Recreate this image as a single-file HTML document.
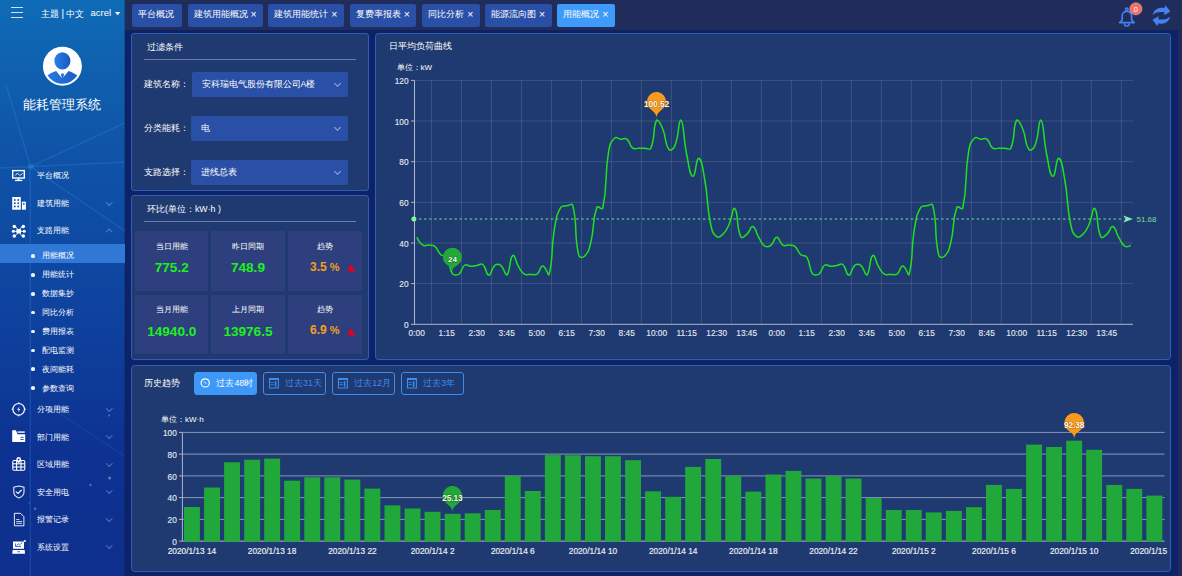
<!DOCTYPE html>
<html><head><meta charset="utf-8">
<style>
*{margin:0;padding:0;box-sizing:border-box}
html,body{width:1182px;height:576px;overflow:hidden}
body{position:relative;background:#0e2268;font-family:"Liberation Sans",sans-serif;color:#fff}
.abs{position:absolute}
#side{left:0;top:0;width:125px;height:576px;background:linear-gradient(180deg,#0f6bb6 0%,#0f55a8 24%,#0e45a0 50%,#0d3292 78%,#0e2f8d 100%);overflow:hidden}
#top{left:125px;top:0;width:1057px;height:30px;background:#202c59}
#strip{left:1178px;top:30px;width:4px;height:546px;background:#1f2a5a}
.tab{position:absolute;top:4px;height:23px;background:#2a4fa6;border-radius:2px;font-size:8.65px;line-height:21.6px;color:#fff;padding-left:6px;white-space:nowrap}
.tab .x{position:absolute;right:6.5px;top:-0.3px;font-size:10.5px}
.tab.on{background:#3f9bfa}
.panel{position:absolute;background:#1f3a70;border:1px solid #2c5fb5;border-radius:3px}
.ptitle{position:absolute;font-size:8.8px;white-space:nowrap;color:#fff}
.hr{position:absolute;height:1px;background:#6b7ba6}
.lbl{position:absolute;font-size:8.8px;white-space:nowrap}
.sel{position:absolute;background:#2a4fa6;border-radius:2px;font-size:8.65px;line-height:25px;padding-left:10px;white-space:nowrap}
.chev{position:absolute;width:5px;height:5px;border-right:1px solid rgba(220,230,255,0.6);border-bottom:1px solid rgba(220,230,255,0.6);transform:rotate(45deg);margin-top:-0.5px}
.cell{position:absolute;background:#2e3f7d;text-align:center}
.cell .t{position:absolute;left:0;right:0;font-size:7.6px}
.cell .v{position:absolute;left:0;right:0;font-size:13px;font-weight:bold;color:#1ff01f}
.menu{position:absolute;left:0;width:125px;font-size:8.3px;white-space:nowrap;margin-top:0.4px}
.menu .txt{position:absolute;left:37px}
.sub{position:absolute;left:0;width:125px;font-size:8.3px;white-space:nowrap}
.sub .dot{position:absolute;left:31.2px;width:3.7px;height:3.7px;border-radius:50%;background:#f0f4ff}
.sub .txt{position:absolute;left:42.3px}
.mchev{position:absolute;left:106.5px;width:4.5px;height:4.5px;border-right:1px solid rgba(255,255,255,0.33);border-bottom:1px solid rgba(255,255,255,0.33);transform:rotate(45deg)}
.btn{position:absolute;top:371.5px;height:23.5px;border:1px solid #3b8ef0;border-radius:3px;color:#3b8ef0;font-size:8.8px;line-height:21.5px;white-space:nowrap}
.btn.on{background:#3e98f8;border-color:#3e98f8;color:#fff}
svg text.ax{font-family:"Liberation Sans",sans-serif;font-size:8.3px;fill:#e6eaf2;stroke:#e6eaf2;stroke-width:0.12}
svg text.ax2{font-family:"Liberation Sans",sans-serif;font-size:8.3px;fill:#e6eaf2;stroke:#e6eaf2;stroke-width:0.2}
svg text.avg{font-family:"Liberation Sans",sans-serif;font-size:8px;fill:#7ddc9c}
svg text.pin{font-family:"Liberation Sans",sans-serif;fill:#fff8e8;stroke:rgba(120,70,10,0.55);stroke-width:1.1;paint-order:stroke;font-weight:bold}
</style></head><body>

<div id="side" class="abs">
  <svg class="abs" style="left:0;top:0" width="125" height="576">
    <g stroke="rgba(70,160,255,0.2)" stroke-width="1.4" fill="none">
      <line x1="30.6" y1="166.7" x2="6" y2="85"/>
      <line x1="30.6" y1="166.7" x2="125" y2="123"/>
      <line x1="30.6" y1="166.7" x2="125" y2="162"/>
      <line x1="30.6" y1="166.7" x2="125" y2="231"/>
      <line x1="30.6" y1="166.7" x2="0" y2="168"/>
      <line x1="30.3" y1="166.7" x2="30.3" y2="576"/>
      <line x1="47" y1="405.5" x2="125" y2="456" opacity="0.6"/>
    </g>
    <circle cx="30.6" cy="166.7" r="3" fill="rgba(120,180,255,0.15)"/>
    <circle cx="109.2" cy="415.6" r="1" fill="rgba(170,200,255,0.45)"/>
    <circle cx="109.6" cy="478.1" r="1.5" fill="rgba(170,200,255,0.5)"/>
    <circle cx="90.4" cy="485" r="1.2" fill="rgba(170,200,255,0.4)"/>
    <circle cx="35" cy="508.8" r="1.3" fill="rgba(170,200,255,0.4)"/>
    <circle cx="29.4" cy="503" r="0.7" fill="rgba(170,200,255,0.4)"/>
    <line x1="124.5" y1="0" x2="124.5" y2="576" stroke="rgba(0,20,80,0.25)" stroke-width="1"/>
  </svg>
  <!-- hamburger -->
  <div class="abs" style="left:11px;top:7px;width:12px;height:1.3px;background:#cfe0ff"></div>
  <div class="abs" style="left:11px;top:11.8px;width:12px;height:1.3px;background:#cfe0ff"></div>
  <div class="abs" style="left:11px;top:16.5px;width:12px;height:1.3px;background:#cfe0ff"></div>
  <div class="abs" style="left:41px;top:8px;font-size:9px;white-space:nowrap;line-height:11px">主题<span style="margin:0 1.8px 0 2.6px;font-size:10px;position:relative;top:-0.5px">|</span>中文</div>
  <div class="abs" style="left:90.5px;top:7px;font-size:9.5px;white-space:nowrap;line-height:11px">acrel</div>
  <svg class="abs" style="left:114.8px;top:11.8px" width="6" height="4"><path d="M0,0 L5.3,0 L2.65,3.3Z" fill="#fff"/></svg>
  <!-- avatar -->
  <svg class="abs" style="left:40px;top:44px" width="45" height="45" viewBox="40 44 45 45">
    <defs><linearGradient id="ag" x1="0" y1="0" x2="1" y2="0"><stop offset="0" stop-color="#2a80e8"/><stop offset="1" stop-color="#1558c0"/></linearGradient>
    <clipPath id="bodyclip"><circle cx="62.4" cy="66.3" r="17.4"/></clipPath></defs>
    <circle cx="62.4" cy="66.3" r="19.5" fill="#fff"/>
    <ellipse cx="62.4" cy="60.9" rx="8" ry="8.7" fill="url(#ag)"/>
    <path clip-path="url(#bodyclip)" d="M40,95 L40,82 C46,76 51,72.5 56.2,71 L62.2,78.6 L68.6,71 C73.5,72.5 79,76 85,82 L85,95 Z" fill="url(#ag)"/>
    <path d="M61.2,73.6 L63.6,73.6 L63.9,75 L63.1,78 L62.4,78.9 L61.7,78 L60.9,75Z" fill="url(#ag)"/>
  </svg>
  <div class="abs" style="left:22.6px;top:97px;font-size:13.3px;white-space:nowrap;line-height:16px;letter-spacing:0px">能耗管理系统</div>

  <!-- menu -->
  <svg class="abs" style="left:0;top:0" width="125" height="576"><rect x="12.7" y="170.6" width="11.6" height="7.4" fill="none" stroke="#fff" stroke-width="1.4"/><path d="M15.3,175.5 L17.4,173 L19.8,175.5 L22.7,173.4" fill="none" stroke="#fff" stroke-width="0.9"/><rect x="17.6" y="178.5" width="1.8" height="1.5" fill="#fff"/><rect x="15" y="179.8" width="7.3" height="1.3" fill="#fff"/></svg>
<div class="menu" style="top:170.1px;line-height:11px"><span class="txt">平台概况</span></div>
<svg class="abs" style="left:0;top:0" width="125" height="576"><rect x="12.2" y="197" width="8.6" height="12.7" fill="#fff"/><rect x="21.9" y="201.7" width="4" height="8" fill="#fff"/><g fill="#1454ae"><circle cx="14.8" cy="200" r="0.95"/><circle cx="18.2" cy="200" r="0.95"/><circle cx="14.8" cy="203.3" r="0.95"/><circle cx="18.2" cy="203.3" r="0.95"/><circle cx="14.8" cy="206.5" r="0.95"/><circle cx="18.2" cy="206.5" r="0.95"/><circle cx="23.8" cy="203.9" r="0.9"/></g></svg>
<div class="menu" style="top:197.6px;line-height:11px"><span class="txt">建筑用能</span></div>
<div class="mchev" style="top:199.6px"></div>
<svg class="abs" style="left:0;top:0" width="125" height="576"><g stroke="#fff" stroke-width="0.9" fill="none"><path d="M14.3,226.5 C16.5,226.5 17,229 18.7,231.3 C20.4,229 21,226.5 23.3,226.5"/><path d="M14.3,236 C16.5,236 17,233.6 18.7,231.3 C20.4,233.6 21,236 23.3,236"/><line x1="13.3" y1="231.3" x2="24.2" y2="231.3"/></g><g fill="#fff"><circle cx="14.3" cy="226.5" r="1.75"/><circle cx="23.3" cy="226.5" r="1.75"/><circle cx="13.3" cy="231.3" r="1.5"/><circle cx="24.2" cy="231.3" r="1.5"/><circle cx="14.3" cy="236" r="1.75"/><circle cx="23.3" cy="236" r="1.75"/><rect x="16.4" y="229.1" width="4.6" height="4.4" rx="1.2"/></g></svg>
<div class="menu" style="top:225.1px;line-height:11px"><span class="txt">支路用能</span></div>
<div class="mchev" style="top:229.6px;transform:rotate(225deg)"></div>
<div class="abs" style="left:0;top:244.4px;width:125px;height:18.6px;background:#2f78d6"></div>
<div class="sub" style="top:250.2px;line-height:11px"><span class="dot" style="top:3.8px"></span><span class="txt">用能概况</span></div>
<div class="sub" style="top:269.2px;line-height:11px"><span class="dot" style="top:3.8px"></span><span class="txt">用能统计</span></div>
<div class="sub" style="top:288.1px;line-height:11px"><span class="dot" style="top:3.8px"></span><span class="txt">数据集抄</span></div>
<div class="sub" style="top:306.9px;line-height:11px"><span class="dot" style="top:3.8px"></span><span class="txt">同比分析</span></div>
<div class="sub" style="top:325.9px;line-height:11px"><span class="dot" style="top:3.8px"></span><span class="txt">费用报表</span></div>
<div class="sub" style="top:344.8px;line-height:11px"><span class="dot" style="top:3.8px"></span><span class="txt">配电监测</span></div>
<div class="sub" style="top:363.6px;line-height:11px"><span class="dot" style="top:3.8px"></span><span class="txt">夜间能耗</span></div>
<div class="sub" style="top:382.6px;line-height:11px"><span class="dot" style="top:3.8px"></span><span class="txt">参数查询</span></div>
<svg class="abs" style="left:0;top:0" width="125" height="576"><circle cx="18.7" cy="409.3" r="5.8" fill="none" stroke="#fff" stroke-width="1.2"/><path d="M19.6,406.2 L17.2,409.8 H18.8 L17.9,412.6 L20.3,408.9 H18.7Z" fill="#fff"/><circle cx="18.7" cy="402.9" r="0.7" fill="#fff"/><circle cx="18.7" cy="415.7" r="0.7" fill="#fff"/><circle cx="12.3" cy="409.3" r="0.7" fill="#fff"/><circle cx="25.1" cy="409.3" r="0.7" fill="#fff"/></svg>
<div class="menu" style="top:403.7px;line-height:11px"><span class="txt">分项用能</span></div>
<div class="mchev" style="top:405.7px"></div>
<svg class="abs" style="left:0;top:0" width="125" height="576"><path d="M12.2,430.2 H16 L17.6,434.2 H25.2 V442 H12.2Z" fill="#fff"/><rect x="17.6" y="431.3" width="7.2" height="1.6" fill="#fff" opacity="0.85"/><rect x="20.4" y="436.9" width="3.3" height="0.9" fill="#1a4aa6"/><rect x="20.4" y="439" width="3.3" height="0.9" fill="#1a4aa6"/></svg>
<div class="menu" style="top:431.2px;line-height:11px"><span class="txt">部门用能</span></div>
<div class="mchev" style="top:433.2px"></div>
<svg class="abs" style="left:0;top:0" width="125" height="576"><g fill="none" stroke="#fff" stroke-width="1.1"><rect x="12.8" y="460.5" width="12" height="9.7" rx="1.2"/><line x1="12.8" y1="463.8" x2="24.8" y2="463.8"/><line x1="12.8" y1="467" x2="24.8" y2="467"/><line x1="16.6" y1="460.5" x2="16.6" y2="470.2"/><line x1="21" y1="460.5" x2="21" y2="470.2"/></g><path d="M18.7,457.1 A2.4,2.4 0 0 1 21.1,459.5 C21.1,461 18.7,463.4 18.7,463.4 C18.7,463.4 16.3,461 16.3,459.5 A2.4,2.4 0 0 1 18.7,457.1Z" fill="#fff"/><circle cx="18.7" cy="459.5" r="0.9" fill="#153f9f"/></svg>
<div class="menu" style="top:458.7px;line-height:11px"><span class="txt">区域用能</span></div>
<div class="mchev" style="top:460.7px"></div>
<svg class="abs" style="left:0;top:0" width="125" height="576"><path d="M18.9,486 L24,487.3 V492 C24,495 21.8,496.9 18.9,498 C16,496.9 13.8,495 13.8,492 V487.3Z" fill="none" stroke="#fff" stroke-width="1.1" opacity="0.9"/><path d="M15.8,491.6 L18.1,493.4 L21.7,489.8" fill="none" stroke="#fff" stroke-width="1.2"/></svg>
<div class="menu" style="top:486.2px;line-height:11px"><span class="txt">安全用电</span></div>
<div class="mchev" style="top:488.2px"></div>
<svg class="abs" style="left:0;top:0" width="125" height="576"><path d="M14.4,513.3 H20.5 L23.9,516.7 V525.8 H14.4Z" fill="none" stroke="#fff" stroke-width="1" opacity="0.9"/><g fill="#fff" opacity="0.85"><rect x="16.2" y="519" width="3.3" height="0.9"/><rect x="16.2" y="521" width="5.9" height="0.9"/><rect x="16.2" y="522.8" width="5.9" height="0.9"/></g></svg>
<div class="menu" style="top:513.7px;line-height:11px"><span class="txt">报警记录</span></div>
<div class="mchev" style="top:515.7px"></div>
<svg class="abs" style="left:0;top:0" width="125" height="576"><rect x="13" y="541.5" width="11" height="7.3" fill="#fff"/><path d="M12.7,550.1 H24.7 L25,553.7 H12.2Z" fill="#fff"/><path d="M15.5,546.5 L15.5,543.5 M15.5,546.5 H21 M16.5,545.5 L18.3,543.8 L19.5,544.8 L22.5,542.5" fill="none" stroke="#1a4aa6" stroke-width="0.8"/><rect x="17.3" y="551.4" width="2.6" height="0.8" fill="#1a4aa6"/><circle cx="24.8" cy="541" r="1.1" fill="#fff"/></svg>
<div class="menu" style="top:541.2px;line-height:11px"><span class="txt">系统设置</span></div>
<div class="mchev" style="top:543.2px"></div>
</div>

<div id="top" class="abs"></div>
<div id="strip" class="abs"></div>
<div class="tab" style="left:131.8px;width:50.3px">平台概况</div>
<div class="tab" style="left:187.6px;width:75.5px">建筑用能概况<span class=x>×</span></div>
<div class="tab" style="left:268.4px;width:75.5px">建筑用能统计<span class=x>×</span></div>
<div class="tab" style="left:349.5px;width:66.8px">复费率报表<span class=x>×</span></div>
<div class="tab" style="left:421.5px;width:58.3px">同比分析<span class=x>×</span></div>
<div class="tab" style="left:485px;width:66.6px">能源流向图<span class=x>×</span></div>
<div class="tab on" style="left:557px;width:57.8px">用能概况<span class=x>×</span></div>

<!-- bell & refresh -->
<svg class="abs" style="left:1100px;top:0" width="82" height="30" viewBox="1100 0 82 30">
  <circle cx="1126.8" cy="9.3" r="1.3" fill="none" stroke="#4282f5" stroke-width="1.5"/>
  <path d="M1119.6,22.6 L1122.2,20 V15.8 C1122.2,13 1124.2,11.3 1126.9,11.3 C1129.6,11.3 1131.6,13 1131.6,15.8 V20 L1134.2,22.6 Z" fill="none" stroke="#4282f5" stroke-width="1.7" stroke-linejoin="round"/>
  <path d="M1124.3,23.4 A2.5,2.5 0 0 0 1129.3,23.4" fill="none" stroke="#4282f5" stroke-width="1.5"/>
  <circle cx="1135.9" cy="8.8" r="6.1" fill="#f36c6a" stroke="#f8b8b0" stroke-width="0.5"/>
  <text x="1135.9" y="11.6" text-anchor="middle" font-family="Liberation Sans" font-size="7.5" fill="#fff">0</text>
  <path d="M1152.5,15 C1154,9 1158.5,7.2 1164.5,7.9 L1165.4,5.3 L1170.4,11.6 L1164.2,15.2 L1164.4,12.2 C1159.5,11.3 1155,12.3 1152.5,15 Z" fill="#4282f5"/>
  <path d="M1170.3,16.4 C1168.8,22.4 1164.3,24.2 1158.3,23.5 L1157.4,26.1 L1152.4,19.8 L1158.6,16.2 L1158.4,19.2 C1163.3,20.1 1167.8,19.1 1170.3,16.4 Z" fill="#4282f5"/>
</svg>

<!-- filter panel -->
<div class="panel" style="left:131px;top:33px;width:238px;height:158px"></div>
<div class="ptitle" style="left:147px;top:41.8px;line-height:11px">过滤条件</div>
<div class="hr" style="left:144px;top:59px;width:212px"></div>
<div class="lbl" style="left:144px;top:79px;line-height:11px">建筑名称：</div>
<div class="sel" style="left:191.5px;top:72px;width:156.5px;height:25px">安科瑞电气股份有限公司A楼</div>
<div class="chev" style="left:335px;top:81px"></div>
<div class="lbl" style="left:144px;top:123px;line-height:11px">分类能耗：</div>
<div class="sel" style="left:191px;top:116px;width:157px;height:25px">电</div>
<div class="chev" style="left:335px;top:125px"></div>
<div class="lbl" style="left:144px;top:167px;line-height:11px">支路选择：</div>
<div class="sel" style="left:191px;top:160px;width:157px;height:25px">进线总表</div>
<div class="chev" style="left:335px;top:169px"></div>

<!-- ratio panel -->
<div class="panel" style="left:131px;top:195px;width:238px;height:165px"></div>
<div class="ptitle" style="left:147px;top:203.5px;line-height:11px">环比(单位：kW·h )</div>
<div class="hr" style="left:144px;top:221px;width:212px"></div>
<div class="cell" style="left:135.2px;top:231.3px;width:73.1px;height:59.6px"><div class="t" style="top:9.3px;line-height:11px">当日用能</div><div class="v" style="top:28.8px;line-height:16px;font-size:13.6px">775.2</div></div>
<div class="cell" style="left:211.3px;top:231.3px;width:73.3px;height:59.6px"><div class="t" style="top:9.3px;line-height:11px">昨日同期</div><div class="v" style="top:28.8px;line-height:16px;font-size:13.6px">748.9</div></div>
<div class="cell" style="left:287.8px;top:231.3px;width:73.9px;height:59.6px"><div class="t" style="top:9.3px;line-height:11px">趋势</div><div class="v" style="top:27.6px;line-height:16px;color:#f5a020;font-size:12px;left:22.3px;text-align:left">3.5<span style='margin-left:3px;font-size:11px'>%</span></div><svg class="abs" style="left:59.3px;top:33.0px" width="10" height="8"><path d="M0,7.2 L4.1,0 L8.2,7.2Z" fill="#e8001a"/></svg></div>
<div class="cell" style="left:135.2px;top:294.8px;width:73.1px;height:59.3px"><div class="t" style="top:9.3px;line-height:11px">当月用能</div><div class="v" style="top:28.8px;line-height:16px;font-size:13.6px">14940.0</div></div>
<div class="cell" style="left:211.3px;top:294.8px;width:73.3px;height:59.3px"><div class="t" style="top:9.3px;line-height:11px">上月同期</div><div class="v" style="top:28.8px;line-height:16px;font-size:13.6px">13976.5</div></div>
<div class="cell" style="left:287.8px;top:294.8px;width:73.9px;height:59.3px"><div class="t" style="top:9.3px;line-height:11px">趋势</div><div class="v" style="top:27.6px;line-height:16px;color:#f5a020;font-size:12px;left:22.3px;text-align:left">6.9<span style='margin-left:3px;font-size:11px'>%</span></div><svg class="abs" style="left:59.3px;top:33.0px" width="10" height="8"><path d="M0,7.2 L4.1,0 L8.2,7.2Z" fill="#e8001a"/></svg></div>

<!-- line chart panel -->
<div class="panel" style="left:375px;top:33px;width:796.4px;height:326.6px;border-radius:3.5px"></div>
<div class="ptitle" style="left:389px;top:41.3px;line-height:11px;font-size:8.6px">日平均负荷曲线</div>
<div class="abs" style="left:396.5px;top:63px;font-size:8px;white-space:nowrap;line-height:10px">单位：kW</div>

<!-- history panel -->
<div class="panel" style="left:131px;top:365px;width:1040.4px;height:206.8px;border-radius:3.5px"></div>
<div class="ptitle" style="left:143.5px;top:378px;line-height:11px">历史趋势</div>
<div class="btn on" style="left:194.4px;width:62.6px"><svg class="abs" style="left:4.6px;top:4.8px" width="12" height="12" viewBox="0 0 12 12"><circle cx="5.2" cy="5.9" r="4.1" fill="none" stroke="#fff" stroke-width="1.15"/><path d="M4.3,4.6 L6,6.7" fill="none" stroke="#fff" stroke-width="1"/></svg><span class="abs" style="left:21px;top:0">过去48时</span></div>
<div class="btn" style="left:263px;width:62.9px"><svg class="abs" style="left:4px;top:4px" width="12" height="12" viewBox="0 0 12 12"><path d="M1.5,1.6 H10.4 V11 H1.5Z" fill="none" stroke="#3b8ef0" stroke-width="1.1"/><rect x="1" y="1.1" width="9.9" height="1.9" fill="#3b8ef0"/><rect x="2.7" y="5" width="3" height="0.9" fill="#3b8ef0"/><rect x="2.7" y="7.2" width="3" height="0.9" fill="#3b8ef0"/><rect x="6.8" y="4.3" width="1.6" height="5.4" fill="#3b8ef0"/></svg><span class="abs" style="left:21px;top:0">过去31天</span></div>
<div class="btn" style="left:332.3px;width:62.7px"><svg class="abs" style="left:4px;top:4px" width="12" height="12" viewBox="0 0 12 12"><path d="M1.5,1.6 H10.4 V11 H1.5Z" fill="none" stroke="#3b8ef0" stroke-width="1.1"/><rect x="1" y="1.1" width="9.9" height="1.9" fill="#3b8ef0"/><rect x="2.7" y="5" width="3" height="0.9" fill="#3b8ef0"/><rect x="2.7" y="7.2" width="3" height="0.9" fill="#3b8ef0"/><rect x="6.8" y="4.3" width="1.6" height="5.4" fill="#3b8ef0"/></svg><span class="abs" style="left:21px;top:0">过去12月</span></div>
<div class="btn" style="left:401.3px;width:62.6px"><svg class="abs" style="left:4px;top:4px" width="12" height="12" viewBox="0 0 12 12"><path d="M1.5,1.6 H10.4 V11 H1.5Z" fill="none" stroke="#3b8ef0" stroke-width="1.1"/><rect x="1" y="1.1" width="9.9" height="1.9" fill="#3b8ef0"/><rect x="2.7" y="5" width="3" height="0.9" fill="#3b8ef0"/><rect x="2.7" y="7.2" width="3" height="0.9" fill="#3b8ef0"/><rect x="6.8" y="4.3" width="1.6" height="5.4" fill="#3b8ef0"/></svg><span class="abs" style="left:21px;top:0">过去3年</span></div>
<div class="abs" style="left:161px;top:415px;font-size:8px;white-space:nowrap;line-height:10px">单位：kW·h</div>

<svg class="abs" style="left:0;top:0" width="1182" height="576">
<defs><clipPath id="bclip"><rect x="131" y="365" width="1037" height="207"/></clipPath></defs>
<line x1="414.5" y1="283.6" x2="1133" y2="283.6" stroke="rgba(255,255,255,0.13)" stroke-width="1"/>
<line x1="414.5" y1="243.0" x2="1133" y2="243.0" stroke="rgba(255,255,255,0.13)" stroke-width="1"/>
<line x1="414.5" y1="202.3" x2="1133" y2="202.3" stroke="rgba(255,255,255,0.13)" stroke-width="1"/>
<line x1="414.5" y1="161.7" x2="1133" y2="161.7" stroke="rgba(255,255,255,0.13)" stroke-width="1"/>
<line x1="414.5" y1="121.0" x2="1133" y2="121.0" stroke="rgba(255,255,255,0.13)" stroke-width="1"/>
<line x1="414.5" y1="80.4" x2="1133" y2="80.4" stroke="rgba(255,255,255,0.13)" stroke-width="1"/>
<line x1="431.5" y1="80.5" x2="431.5" y2="324.3" stroke="rgba(255,255,255,0.13)" stroke-width="1"/>
<line x1="461.5" y1="80.5" x2="461.5" y2="324.3" stroke="rgba(255,255,255,0.13)" stroke-width="1"/>
<line x1="491.5" y1="80.5" x2="491.5" y2="324.3" stroke="rgba(255,255,255,0.13)" stroke-width="1"/>
<line x1="521.5" y1="80.5" x2="521.5" y2="324.3" stroke="rgba(255,255,255,0.13)" stroke-width="1"/>
<line x1="551.5" y1="80.5" x2="551.5" y2="324.3" stroke="rgba(255,255,255,0.13)" stroke-width="1"/>
<line x1="581.5" y1="80.5" x2="581.5" y2="324.3" stroke="rgba(255,255,255,0.13)" stroke-width="1"/>
<line x1="611.4" y1="80.5" x2="611.4" y2="324.3" stroke="rgba(255,255,255,0.13)" stroke-width="1"/>
<line x1="641.4" y1="80.5" x2="641.4" y2="324.3" stroke="rgba(255,255,255,0.13)" stroke-width="1"/>
<line x1="671.4" y1="80.5" x2="671.4" y2="324.3" stroke="rgba(255,255,255,0.13)" stroke-width="1"/>
<line x1="701.4" y1="80.5" x2="701.4" y2="324.3" stroke="rgba(255,255,255,0.13)" stroke-width="1"/>
<line x1="731.4" y1="80.5" x2="731.4" y2="324.3" stroke="rgba(255,255,255,0.13)" stroke-width="1"/>
<line x1="761.4" y1="80.5" x2="761.4" y2="324.3" stroke="rgba(255,255,255,0.13)" stroke-width="1"/>
<line x1="791.4" y1="80.5" x2="791.4" y2="324.3" stroke="rgba(255,255,255,0.13)" stroke-width="1"/>
<line x1="821.4" y1="80.5" x2="821.4" y2="324.3" stroke="rgba(255,255,255,0.13)" stroke-width="1"/>
<line x1="851.4" y1="80.5" x2="851.4" y2="324.3" stroke="rgba(255,255,255,0.13)" stroke-width="1"/>
<line x1="881.3" y1="80.5" x2="881.3" y2="324.3" stroke="rgba(255,255,255,0.13)" stroke-width="1"/>
<line x1="911.3" y1="80.5" x2="911.3" y2="324.3" stroke="rgba(255,255,255,0.13)" stroke-width="1"/>
<line x1="941.3" y1="80.5" x2="941.3" y2="324.3" stroke="rgba(255,255,255,0.13)" stroke-width="1"/>
<line x1="971.3" y1="80.5" x2="971.3" y2="324.3" stroke="rgba(255,255,255,0.13)" stroke-width="1"/>
<line x1="1001.3" y1="80.5" x2="1001.3" y2="324.3" stroke="rgba(255,255,255,0.13)" stroke-width="1"/>
<line x1="1031.3" y1="80.5" x2="1031.3" y2="324.3" stroke="rgba(255,255,255,0.13)" stroke-width="1"/>
<line x1="1061.3" y1="80.5" x2="1061.3" y2="324.3" stroke="rgba(255,255,255,0.13)" stroke-width="1"/>
<line x1="1091.3" y1="80.5" x2="1091.3" y2="324.3" stroke="rgba(255,255,255,0.13)" stroke-width="1"/>
<line x1="1121.3" y1="80.5" x2="1121.3" y2="324.3" stroke="rgba(255,255,255,0.13)" stroke-width="1"/>
<line x1="414.5" y1="80.5" x2="414.5" y2="324.8" stroke="#aeb6d0" stroke-width="1"/>
<line x1="414.5" y1="324.3" x2="1133" y2="324.3" stroke="#aeb6d0" stroke-width="1"/>
<line x1="411" y1="324.3" x2="414.5" y2="324.3" stroke="#aeb6d0" stroke-width="1"/>
<text x="408.5" y="327.9" text-anchor="end" class="ax">0</text>
<line x1="411" y1="283.6" x2="414.5" y2="283.6" stroke="#aeb6d0" stroke-width="1"/>
<text x="408.5" y="287.2" text-anchor="end" class="ax">20</text>
<line x1="411" y1="243.0" x2="414.5" y2="243.0" stroke="#aeb6d0" stroke-width="1"/>
<text x="408.5" y="246.6" text-anchor="end" class="ax">40</text>
<line x1="411" y1="202.3" x2="414.5" y2="202.3" stroke="#aeb6d0" stroke-width="1"/>
<text x="408.5" y="205.9" text-anchor="end" class="ax">60</text>
<line x1="411" y1="161.7" x2="414.5" y2="161.7" stroke="#aeb6d0" stroke-width="1"/>
<text x="408.5" y="165.3" text-anchor="end" class="ax">80</text>
<line x1="411" y1="121.0" x2="414.5" y2="121.0" stroke="#aeb6d0" stroke-width="1"/>
<text x="408.5" y="124.6" text-anchor="end" class="ax">100</text>
<line x1="411" y1="80.4" x2="414.5" y2="80.4" stroke="#aeb6d0" stroke-width="1"/>
<text x="408.5" y="84.0" text-anchor="end" class="ax">120</text>
<text x="416.7" y="336" text-anchor="middle" class="ax">0:00</text>
<text x="446.7" y="336" text-anchor="middle" class="ax">1:15</text>
<text x="476.7" y="336" text-anchor="middle" class="ax">2:30</text>
<text x="506.7" y="336" text-anchor="middle" class="ax">3:45</text>
<text x="536.7" y="336" text-anchor="middle" class="ax">5:00</text>
<text x="566.7" y="336" text-anchor="middle" class="ax">6:15</text>
<text x="596.7" y="336" text-anchor="middle" class="ax">7:30</text>
<text x="626.7" y="336" text-anchor="middle" class="ax">8:45</text>
<text x="656.7" y="336" text-anchor="middle" class="ax">10:00</text>
<text x="686.7" y="336" text-anchor="middle" class="ax">11:15</text>
<text x="716.7" y="336" text-anchor="middle" class="ax">12:30</text>
<text x="746.7" y="336" text-anchor="middle" class="ax">13:45</text>
<text x="776.7" y="336" text-anchor="middle" class="ax">0:00</text>
<text x="806.7" y="336" text-anchor="middle" class="ax">1:15</text>
<text x="836.7" y="336" text-anchor="middle" class="ax">2:30</text>
<text x="866.7" y="336" text-anchor="middle" class="ax">3:45</text>
<text x="896.7" y="336" text-anchor="middle" class="ax">5:00</text>
<text x="926.7" y="336" text-anchor="middle" class="ax">6:15</text>
<text x="956.7" y="336" text-anchor="middle" class="ax">7:30</text>
<text x="986.7" y="336" text-anchor="middle" class="ax">8:45</text>
<text x="1016.7" y="336" text-anchor="middle" class="ax">10:00</text>
<text x="1046.7" y="336" text-anchor="middle" class="ax">11:15</text>
<text x="1076.7" y="336" text-anchor="middle" class="ax">12:30</text>
<text x="1106.7" y="336" text-anchor="middle" class="ax">13:45</text>
<line x1="419" y1="219" x2="1124" y2="219" stroke="#5cc096" stroke-width="1.6" stroke-dasharray="2.4,2.67" opacity="0.85"/>
<circle cx="413.9" cy="219" r="2.5" fill="#80f5a5"/>
<path d="M1123.3,215.6 L1133,219 L1123.3,222.4 L1125.5,219 Z" fill="#7ff0b0"/>
<text x="1136.5" y="222.2" class="avg">51.68</text>
<path d="M416.80,237.20 C416.80,237.20 419.06,242.64 422.80,245.10 C425.06,246.59 425.83,244.78 428.80,245.10 C431.83,245.43 432.56,244.59 434.80,246.40 C438.56,249.44 437.10,251.50 440.80,254.80 C443.10,256.85 445.24,254.55 446.80,257.10 C451.24,264.35 448.28,267.88 452.80,274.40 C454.28,275.10 456.70,275.10 458.80,274.40 C462.70,271.34 460.93,267.61 464.80,265.00 C466.93,263.56 467.78,266.20 470.80,266.30 C473.78,266.40 473.80,265.85 476.80,265.40 C479.80,264.95 480.81,262.89 482.80,264.50 C486.81,267.74 485.70,274.87 488.80,275.10 C491.70,275.10 490.87,268.58 494.80,265.40 C496.87,263.73 498.73,263.73 500.80,265.40 C504.73,268.58 504.65,275.10 506.80,275.10 C510.65,271.92 509.14,257.91 512.80,255.50 C515.14,253.96 515.30,261.68 518.80,267.20 C521.30,271.13 521.14,272.21 524.80,274.40 C527.14,275.10 527.80,274.40 530.80,274.40 C533.80,274.40 534.58,275.10 536.80,274.40 C540.58,271.78 539.88,265.93 542.80,266.10 C545.88,266.28 547.71,275.10 548.80,275.10 C553.71,258.93 550.55,250.58 554.80,226.60 C556.55,216.73 556.22,215.35 560.80,207.40 C562.22,204.95 563.75,206.31 566.80,205.80 C569.75,205.31 572.16,202.75 572.80,205.40 C578.16,227.60 573.44,232.94 578.80,255.50 C579.44,258.19 583.06,257.79 584.80,255.90 C589.06,251.24 589.04,249.52 590.80,242.40 C595.04,225.27 591.67,222.10 596.80,207.40 C597.67,204.90 602.23,210.69 602.80,208.00 C608.23,182.19 603.95,178.67 608.80,150.40 C609.95,143.67 610.65,141.88 614.80,138.00 C616.65,136.28 617.77,138.90 620.80,139.20 C623.77,139.50 624.66,137.59 626.80,139.20 C630.66,142.09 628.94,145.31 632.80,148.20 C634.94,149.81 635.80,148.20 638.80,148.20 C641.80,148.20 641.80,148.20 644.80,148.20 C647.80,148.20 649.77,150.63 650.80,148.20 C655.77,136.53 652.44,126.98 656.80,120.00 C658.44,120.00 660.77,124.05 662.80,129.00 C666.77,138.70 664.27,142.93 668.80,149.30 C670.27,151.38 673.56,148.92 674.80,145.90 C679.56,134.27 678.23,120.00 680.80,120.00 C684.23,122.60 683.11,137.66 686.80,155.00 C689.11,165.86 689.57,175.51 692.80,176.40 C695.57,177.16 696.05,157.47 698.80,158.30 C702.05,159.27 702.81,168.94 704.80,180.00 C708.81,202.29 706.15,203.02 710.80,225.00 C712.15,231.37 712.77,233.54 716.80,236.70 C718.77,238.24 720.61,236.54 722.80,234.40 C726.61,230.69 726.46,230.03 728.80,225.00 C732.46,217.13 732.53,206.39 734.80,208.60 C738.53,212.24 735.90,226.16 740.80,236.70 C741.90,239.06 744.43,236.39 746.80,234.40 C750.43,231.34 750.15,225.92 752.80,226.60 C756.15,227.47 755.54,232.21 758.80,237.50 C761.54,241.96 761.00,243.63 764.80,246.10 C767.00,247.53 768.55,246.97 770.80,245.30 C774.55,242.52 773.78,237.25 776.80,237.20 C779.78,237.15 779.06,242.64 782.80,245.10 C785.06,246.59 785.83,244.78 788.80,245.10 C791.83,245.43 792.56,244.59 794.80,246.40 C798.56,249.44 797.10,251.50 800.80,254.80 C803.10,256.85 805.24,254.55 806.80,257.10 C811.24,264.35 808.28,267.88 812.80,274.40 C814.28,275.10 816.70,275.10 818.80,274.40 C822.70,271.34 820.93,267.61 824.80,265.00 C826.93,263.56 827.78,266.20 830.80,266.30 C833.78,266.40 833.80,265.85 836.80,265.40 C839.80,264.95 840.81,262.89 842.80,264.50 C846.81,267.74 845.70,274.87 848.80,275.10 C851.70,275.10 850.87,268.58 854.80,265.40 C856.87,263.73 858.73,263.73 860.80,265.40 C864.73,268.58 864.65,275.10 866.80,275.10 C870.65,271.92 869.14,257.91 872.80,255.50 C875.14,253.96 875.30,261.68 878.80,267.20 C881.30,271.13 881.14,272.21 884.80,274.40 C887.14,275.10 887.80,274.40 890.80,274.40 C893.80,274.40 894.58,275.10 896.80,274.40 C900.58,271.78 899.88,265.93 902.80,266.10 C905.88,266.28 907.71,275.10 908.80,275.10 C913.71,258.93 910.55,250.58 914.80,226.60 C916.55,216.73 916.22,215.35 920.80,207.40 C922.22,204.95 923.75,206.31 926.80,205.80 C929.75,205.31 932.16,202.75 932.80,205.40 C938.16,227.60 933.44,232.94 938.80,255.50 C939.44,258.19 943.06,257.79 944.80,255.90 C949.06,251.24 949.04,249.52 950.80,242.40 C955.04,225.27 951.67,222.10 956.80,207.40 C957.67,204.90 962.23,210.69 962.80,208.00 C968.23,182.19 963.95,178.67 968.80,150.40 C969.95,143.67 970.65,141.88 974.80,138.00 C976.65,136.28 977.77,138.90 980.80,139.20 C983.77,139.50 984.66,137.59 986.80,139.20 C990.66,142.09 988.94,145.31 992.80,148.20 C994.94,149.81 995.80,148.20 998.80,148.20 C1001.80,148.20 1001.80,148.20 1004.80,148.20 C1007.80,148.20 1009.77,150.63 1010.80,148.20 C1015.77,136.53 1012.44,126.98 1016.80,120.00 C1018.44,120.00 1020.77,124.05 1022.80,129.00 C1026.77,138.70 1024.27,142.93 1028.80,149.30 C1030.27,151.38 1033.56,148.92 1034.80,145.90 C1039.56,134.27 1038.23,120.00 1040.80,120.00 C1044.23,122.60 1043.11,137.66 1046.80,155.00 C1049.11,165.86 1049.57,175.51 1052.80,176.40 C1055.57,177.16 1056.05,157.47 1058.80,158.30 C1062.05,159.27 1062.81,168.94 1064.80,180.00 C1068.81,202.29 1066.15,203.02 1070.80,225.00 C1072.15,231.37 1072.77,233.54 1076.80,236.70 C1078.77,238.24 1080.61,236.54 1082.80,234.40 C1086.61,230.69 1086.46,230.03 1088.80,225.00 C1092.46,217.13 1092.53,206.39 1094.80,208.60 C1098.53,212.24 1095.90,226.16 1100.80,236.70 C1101.90,239.06 1104.43,236.39 1106.80,234.40 C1110.43,231.34 1110.15,225.92 1112.80,226.60 C1116.15,227.47 1115.54,232.21 1118.80,237.50 C1121.54,241.96 1121.00,243.63 1124.80,246.10 C1127.00,247.53 1130.80,245.30 1130.80,245.30" fill="none" stroke="#1fe01f" stroke-width="1.5" stroke-linejoin="round"/>
<path d="M648.05,105.93 A9.5,9.5 0 1 1 664.95,105.93 C662.36,111.01 656.50,111.45 656.50,118.10 C656.50,111.45 650.64,111.01 648.05,105.93Z" fill="#f89a1e"/><text x="656.5" y="106.8" text-anchor="middle" class="pin" style="font-size:8.2px;stroke:rgba(150,80,0,0.6)">100.52</text>
<path d="M444.12,261.81 A9.45,9.45 0 1 1 460.68,261.81 C457.95,266.77 452.40,265.69 452.40,272.30 C452.40,265.69 446.85,266.77 444.12,261.81Z" fill="#22a83a"/><text x="452.4" y="261.8" text-anchor="middle" class="pin" style="font-size:8px;stroke:rgba(0,90,20,0.6)">24</text>
<g clip-path="url(#bclip)">
<line x1="182.4" y1="519.4" x2="1164.6" y2="519.4" stroke="rgba(220,225,240,0.55)" stroke-width="1"/>
<line x1="182.4" y1="497.6" x2="1164.6" y2="497.6" stroke="rgba(220,225,240,0.55)" stroke-width="1"/>
<line x1="182.4" y1="475.9" x2="1164.6" y2="475.9" stroke="rgba(220,225,240,0.55)" stroke-width="1"/>
<line x1="182.4" y1="454.1" x2="1164.6" y2="454.1" stroke="rgba(220,225,240,0.55)" stroke-width="1"/>
<line x1="182.4" y1="432.4" x2="1164.6" y2="432.4" stroke="rgba(220,225,240,0.55)" stroke-width="1"/>
<line x1="182.4" y1="541.1" x2="1164.6" y2="541.1" stroke="#aeb6d0" stroke-width="1"/>
<rect x="184.0" y="507.0" width="15.9" height="34.7" fill="#20a83a"/>
<rect x="204.1" y="487.5" width="15.9" height="54.2" fill="#20a83a"/>
<rect x="224.1" y="462.3" width="15.9" height="79.4" fill="#20a83a"/>
<rect x="244.2" y="459.7" width="15.9" height="82.0" fill="#20a83a"/>
<rect x="264.2" y="458.6" width="15.9" height="83.1" fill="#20a83a"/>
<rect x="284.2" y="480.7" width="15.9" height="61.0" fill="#20a83a"/>
<rect x="304.3" y="477.3" width="15.9" height="64.4" fill="#20a83a"/>
<rect x="324.3" y="477.3" width="15.9" height="64.4" fill="#20a83a"/>
<rect x="344.4" y="479.6" width="15.9" height="62.1" fill="#20a83a"/>
<rect x="364.4" y="488.6" width="15.9" height="53.1" fill="#20a83a"/>
<rect x="384.5" y="505.4" width="15.9" height="36.3" fill="#20a83a"/>
<rect x="404.6" y="508.5" width="15.9" height="33.2" fill="#20a83a"/>
<rect x="424.6" y="511.8" width="15.9" height="29.9" fill="#20a83a"/>
<rect x="444.7" y="513.8" width="15.9" height="27.9" fill="#20a83a"/>
<rect x="464.7" y="513.3" width="15.9" height="28.4" fill="#20a83a"/>
<rect x="484.8" y="510.0" width="15.9" height="31.7" fill="#20a83a"/>
<rect x="504.8" y="475.9" width="15.9" height="65.8" fill="#20a83a"/>
<rect x="524.8" y="491.0" width="15.9" height="50.7" fill="#20a83a"/>
<rect x="544.9" y="455.1" width="15.9" height="86.6" fill="#20a83a"/>
<rect x="564.9" y="455.3" width="15.9" height="86.4" fill="#20a83a"/>
<rect x="585.0" y="456.2" width="15.9" height="85.5" fill="#20a83a"/>
<rect x="605.0" y="456.2" width="15.9" height="85.5" fill="#20a83a"/>
<rect x="625.1" y="460.2" width="15.9" height="81.5" fill="#20a83a"/>
<rect x="645.1" y="491.3" width="15.9" height="50.4" fill="#20a83a"/>
<rect x="665.2" y="496.8" width="15.9" height="44.9" fill="#20a83a"/>
<rect x="685.2" y="466.9" width="15.9" height="74.8" fill="#20a83a"/>
<rect x="705.3" y="459.0" width="15.9" height="82.7" fill="#20a83a"/>
<rect x="725.3" y="476.1" width="15.9" height="65.6" fill="#20a83a"/>
<rect x="745.4" y="491.6" width="15.9" height="50.1" fill="#20a83a"/>
<rect x="765.5" y="474.5" width="15.9" height="67.2" fill="#20a83a"/>
<rect x="785.5" y="470.9" width="15.9" height="70.8" fill="#20a83a"/>
<rect x="805.5" y="478.5" width="15.9" height="63.2" fill="#20a83a"/>
<rect x="825.6" y="476.1" width="15.9" height="65.6" fill="#20a83a"/>
<rect x="845.6" y="478.5" width="15.9" height="63.2" fill="#20a83a"/>
<rect x="865.7" y="498.1" width="15.9" height="43.6" fill="#20a83a"/>
<rect x="885.8" y="510.0" width="15.9" height="31.7" fill="#20a83a"/>
<rect x="905.8" y="510.0" width="15.9" height="31.7" fill="#20a83a"/>
<rect x="925.8" y="512.4" width="15.9" height="29.3" fill="#20a83a"/>
<rect x="945.9" y="510.9" width="15.9" height="30.8" fill="#20a83a"/>
<rect x="966.0" y="507.2" width="15.9" height="34.5" fill="#20a83a"/>
<rect x="986.0" y="484.9" width="15.9" height="56.8" fill="#20a83a"/>
<rect x="1006.0" y="488.9" width="15.9" height="52.8" fill="#20a83a"/>
<rect x="1026.1" y="444.6" width="15.9" height="97.1" fill="#20a83a"/>
<rect x="1046.1" y="447.0" width="15.9" height="94.7" fill="#20a83a"/>
<rect x="1066.2" y="440.7" width="15.9" height="101.0" fill="#20a83a"/>
<rect x="1086.2" y="449.8" width="15.9" height="91.9" fill="#20a83a"/>
<rect x="1106.3" y="484.9" width="15.9" height="56.8" fill="#20a83a"/>
<rect x="1126.3" y="488.9" width="15.9" height="52.8" fill="#20a83a"/>
<rect x="1146.4" y="495.6" width="15.9" height="46.1" fill="#20a83a"/>
<line x1="182.4" y1="432.4" x2="182.4" y2="541.1" stroke="#aeb6d0" stroke-width="1"/>
<line x1="179" y1="541.1" x2="182.4" y2="541.1" stroke="#aeb6d0" stroke-width="1"/>
<text x="176.8" y="544.8" text-anchor="end" class="ax">0</text>
<line x1="179" y1="519.4" x2="182.4" y2="519.4" stroke="#aeb6d0" stroke-width="1"/>
<text x="176.8" y="523.1" text-anchor="end" class="ax">20</text>
<line x1="179" y1="497.6" x2="182.4" y2="497.6" stroke="#aeb6d0" stroke-width="1"/>
<text x="176.8" y="501.3" text-anchor="end" class="ax">40</text>
<line x1="179" y1="475.9" x2="182.4" y2="475.9" stroke="#aeb6d0" stroke-width="1"/>
<text x="176.8" y="479.6" text-anchor="end" class="ax">60</text>
<line x1="179" y1="454.1" x2="182.4" y2="454.1" stroke="#aeb6d0" stroke-width="1"/>
<text x="176.8" y="457.8" text-anchor="end" class="ax">80</text>
<line x1="179" y1="432.4" x2="182.4" y2="432.4" stroke="#aeb6d0" stroke-width="1"/>
<text x="176.8" y="436.1" text-anchor="end" class="ax">100</text>
<text x="191.9" y="553.6" text-anchor="middle" class="ax2">2020/1/13 14</text>
<text x="272.1" y="553.6" text-anchor="middle" class="ax2">2020/1/13 18</text>
<text x="352.4" y="553.6" text-anchor="middle" class="ax2">2020/1/13 22</text>
<text x="432.6" y="553.6" text-anchor="middle" class="ax2">2020/1/14 2</text>
<text x="512.8" y="553.6" text-anchor="middle" class="ax2">2020/1/14 6</text>
<text x="593.0" y="553.6" text-anchor="middle" class="ax2">2020/1/14 10</text>
<text x="673.2" y="553.6" text-anchor="middle" class="ax2">2020/1/14 14</text>
<text x="753.3" y="553.6" text-anchor="middle" class="ax2">2020/1/14 18</text>
<text x="833.5" y="553.6" text-anchor="middle" class="ax2">2020/1/14 22</text>
<text x="913.8" y="553.6" text-anchor="middle" class="ax2">2020/1/15 2</text>
<text x="994.0" y="553.6" text-anchor="middle" class="ax2">2020/1/15 6</text>
<text x="1074.2" y="553.6" text-anchor="middle" class="ax2">2020/1/15 10</text>
<text x="1154.4" y="553.6" text-anchor="middle" class="ax2">2020/1/15 14</text>
<path d="M1065.59,427.32 A9.75,9.75 0 1 1 1082.81,427.32 C1080.07,432.49 1074.20,432.18 1074.20,439.00 C1074.20,432.18 1068.33,432.49 1065.59,427.32Z" fill="#f89a1e"/><text x="1074.2" y="427.9" text-anchor="middle" class="pin" style="font-size:8.2px;stroke:rgba(150,80,0,0.6)">92.38</text>
<path d="M443.85,500.07 A9.6,9.6 0 1 1 460.95,500.07 C458.32,505.20 452.40,505.68 452.40,512.40 C452.40,505.68 446.48,505.20 443.85,500.07Z" fill="#22a83a"/><text x="452.4" y="501.0" text-anchor="middle" class="pin" style="font-size:8.2px;stroke:rgba(0,90,20,0.6)">25.13</text>
</g>
</svg>
</body></html>
